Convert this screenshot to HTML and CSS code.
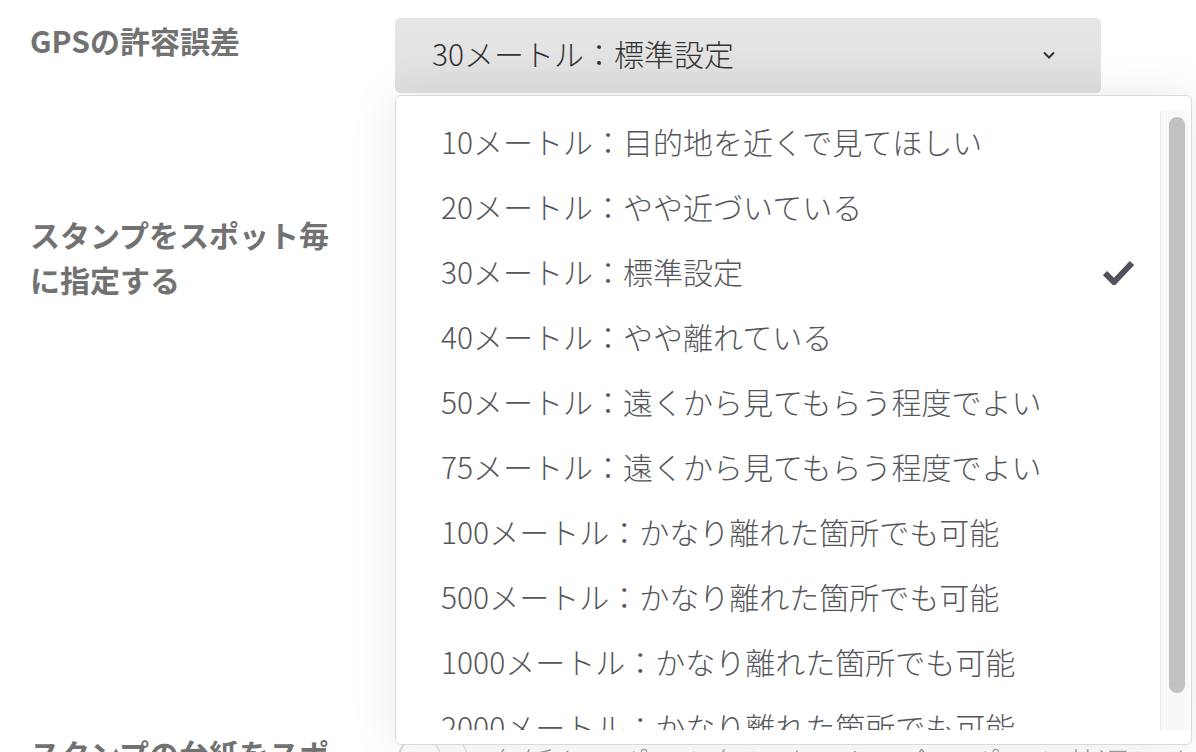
FILE: index.html
```html
<!DOCTYPE html>
<html lang="ja">
<head>
    <meta charset="UTF-8">
    <meta name="viewport" content="width=device-width, initial-scale=1.0">
    <title>スタンプラリー設定</title>
    <link rel="stylesheet" href="styles.css">
</head>
<body>

<div class="settings">

    <div class="row">
        <label class="row-label" for="gpsRange">GPSの許容誤差</label>
        <div class="row-field">
            <div class="select" id="gpsRange">
                <span class="select-value">30メートル：標準設定</span>
                <svg class="select-arrow" width="12" height="8" viewBox="0 0 12 8">
                    <polyline points="1,1.5 6,6.5 11,1.5" fill="none" stroke="#333" stroke-width="2"/>
                </svg>
            </div>

            <div class="dropdown">
                <div class="dropdown-list">
                    <div class="option">10メートル：目的地を近くで見てほしい</div>
                    <div class="option">20メートル：やや近づいている</div>
                    <div class="option">30メートル：標準設定
                        <svg class="option-check" width="32" height="26" viewBox="0 0 32 26">
                            <polyline points="2,14 11,23 29,4" fill="none" stroke="#50535b" stroke-width="6"/>
                        </svg>
                    </div>
                    <div class="option">40メートル：やや離れている</div>
                    <div class="option">50メートル：遠くから見てもらう程度でよい</div>
                    <div class="option">75メートル：遠くから見てもらう程度でよい</div>
                    <div class="option">100メートル：かなり離れた箇所でも可能</div>
                    <div class="option">500メートル：かなり離れた箇所でも可能</div>
                    <div class="option">1000メートル：かなり離れた箇所でも可能</div>
                    <div class="option">2000メートル：かなり離れた箇所でも可能</div>
                </div>
                <div class="scrollbar">
                    <div class="scrollbar-thumb"></div>
                </div>
            </div>
        </div>
    </div>

    <div class="row row-spot">
        <div class="row-label">スタンプをスポット毎に指定する</div>
        <div class="row-field toggle-field">
            <div class="toggle"><span class="toggle-knob"></span></div>
        </div>
    </div>

    <div class="row">
        <div class="row-label">スタンプの台紙をスポット毎に指定する</div>
        <div class="row-field toggle-field">
            <div class="toggle"><span class="toggle-knob"></span></div>
            <div class="desc">台紙をスポット毎にするか、全スポット共通にするか</div>
        </div>
    </div>

</div>

</body>
</html>
```

FILE: styles.css
```css
body {
    margin: 0;
    font-family: "Noto Sans CJK JP", "Noto Sans", sans-serif;
    background-color: #fff;
    overflow: hidden;
}

.settings {
    padding: 18px 0 0 30px;
}

.row {
    display: flex;
    align-items: flex-start;
}

.row-spot {
    margin-top: 119px;
    min-height: 519px;
}

.row-label {
    width: 365px;
    flex-shrink: 0;
    padding-right: 50px;
    box-sizing: border-box;
    font-size: 30px;
    line-height: 45px;
    font-weight: bold;
    color: #727272;
}

.row-field {
    position: relative;
    width: 706px;
}

.select {
    height: 75px;
    box-sizing: border-box;
    display: flex;
    align-items: center;
    justify-content: space-between;
    padding: 0 46px 6px 37px;
    background: linear-gradient(#e6e6e6, #e0e0e0);
    border-radius: 5px;
    font-size: 30px;
    font-weight: 300;
    color: #333;
}

.select-arrow {
    margin-top: 4px;
}

.dropdown {
    position: absolute;
    left: 0;
    top: 77px;
    z-index: 10;
    width: 797px;
    height: 650px;
    box-sizing: border-box;
    display: flex;
    padding: 15px 2px 14px 0;
    background: #fff;
    border: 1px solid #dadada;
    border-radius: 6px;
    box-shadow: 0 0 50px rgba(0,0,0,0.09);
}

.dropdown-list {
    flex: 1;
    overflow: hidden;
}

.option {
    height: 65px;
    box-sizing: border-box;
    display: flex;
    align-items: center;
    justify-content: space-between;
    padding: 0 25px 6px 45px;
    font-size: 30px;
    font-weight: 300;
    color: #55565b;
    white-space: nowrap;
}

.option-check {
    margin-top: 2px;
}

.scrollbar {
    width: 29px;
    flex-shrink: 0;
    box-sizing: border-box;
    padding: 6px 4px 0 8px;
    background: #f8f8f8;
    border-left: 1px solid #e6e6e6;
}

.scrollbar-thumb {
    height: 576px;
    border-radius: 8px;
    background: #c1c1c1;
}

.toggle-field {
    flex: 1;
    min-width: 0;
    display: flex;
    align-items: flex-start;
    gap: 22px;
    overflow: hidden;
}

.toggle {
    width: 70px;
    height: 44px;
    flex-shrink: 0;
    box-sizing: border-box;
    margin: 5px 0 0 3px;
    border: 1px solid #d4d4d4;
    border-radius: 22px;
    background: #fff;
}

.toggle-knob {
    display: block;
    width: 42px;
    height: 42px;
    box-sizing: border-box;
    border: 1px solid #d4d4d4;
    border-radius: 50%;
    background: #fff;
}

.desc {
    margin-top: 9px;
    font-size: 32px;
    line-height: 45px;
    font-weight: 300;
    color: #a0a0a0;
    white-space: nowrap;
}
```
